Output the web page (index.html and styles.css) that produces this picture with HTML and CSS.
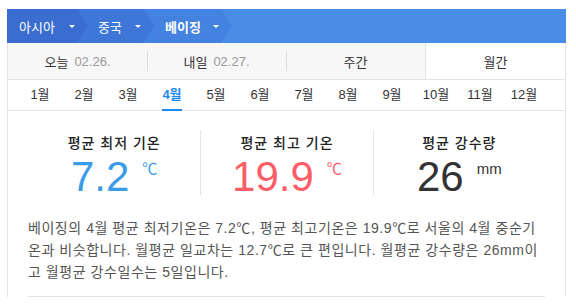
FILE: index.html
```html
<!DOCTYPE html>
<html lang="ko">
  <head>
    <meta charset="UTF-8" />
    <meta name="viewport" content="width=device-width, initial-scale=1.0" />
    <title>월간 날씨</title>
    <link rel="stylesheet" href="styles.css">
  </head>
  <body>
    <div class="weather">
      <div class="crumbs">
        <a class="crumb crumb-1" href="#">아시아<span class="caret"></span></a>
        <a class="crumb crumb-2" href="#">중국<span class="caret"></span></a>
        <a class="crumb crumb-3 current" href="#">베이징<span class="caret"></span></a>
      </div>

      <div class="panel">
        <ul class="tabs">
          <li>오늘<span class="date">02.26.</span></li>
          <li>내일<span class="date">02.27.</span></li>
          <li>주간</li>
          <li class="active">월간</li>
        </ul>

        <ul class="months">
          <li><a href="#">1월</a></li>
          <li><a href="#">2월</a></li>
          <li><a href="#">3월</a></li>
          <li><a href="#" class="on">4월</a></li>
          <li><a href="#">5월</a></li>
          <li><a href="#">6월</a></li>
          <li><a href="#">7월</a></li>
          <li><a href="#">8월</a></li>
          <li><a href="#">9월</a></li>
          <li><a href="#">10월</a></li>
          <li><a href="#">11월</a></li>
          <li><a href="#">12월</a></li>
        </ul>

        <div class="stats">
          <div class="stat">
            <h3>평균 최저 기온</h3>
            <div class="value low"><span class="num">7.2</span><span class="unit">℃</span></div>
          </div>
          <div class="stat">
            <h3>평균 최고 기온</h3>
            <div class="value high"><span class="num">19.9</span><span class="unit">℃</span></div>
          </div>
          <div class="stat">
            <h3>평균 강수량</h3>
            <div class="value rain"><span class="num">26</span><span class="unit">mm</span></div>
          </div>
        </div>

        <p class="summary">
          베이징의 4월 평균 최저기온은 7.2℃, 평균 최고기온은 19.9℃로 서울의 4월 중순기온과 비슷합니다. 월평균 일교차는 12.7℃로 큰 편입니다. 월평균 강수량은 26mm이고 월평균 강수일수는 5일입니다.
        </p>
        <hr class="divider" />
      </div>
    </div>
  </body>
</html>
```

FILE: styles.css
```css
body {
  margin: 0;
  font-family: "Liberation Sans", "Noto Sans CJK KR", sans-serif;
  color: #333;
  background-color: #fff;
}
.weather {
  margin: 9px 0 0 7px;
  width: 559px;
}

/* breadcrumb bar */
.crumbs {
  display: flex;
  height: 34px;
  background-color: #4a8de6;
}
.crumb {
  position: relative;
  display: flex;
  align-items: center;
  color: #fff;
  font-size: 13px;
  text-decoration: none;
  box-sizing: border-box;
}
.crumb::after {
  content: "";
  position: absolute;
  top: 0;
  right: -11px;
  border-left: 11px solid;
  border-top: 17px solid transparent;
  border-bottom: 17px solid transparent;
  z-index: 1;
}
.crumb-1 {
  width: 70px;
  padding-left: 12px;
  background-color: #3a6dcf;
  z-index: 3;
}
.crumb-1::after {
  border-left-color: #3a6dcf;
}
.crumb-2 {
  width: 66px;
  padding-left: 21px;
  background-color: #3e77d8;
  z-index: 2;
}
.crumb-2::after {
  border-left-color: #3e77d8;
}
.crumb-3 {
  width: 78px;
  padding-left: 22px;
  background-color: #4482df;
  z-index: 1;
}
.crumb-3::after {
  border-left-color: #4482df;
}
.crumb.current {
  font-weight: bold;
}
.caret {
  margin-left: auto;
  margin-right: 2px;
  border-left: 3px solid transparent;
  border-right: 3px solid transparent;
  border-top: 3px solid #fff;
}

.panel {
  border-left: 1px solid #e5e5e5;
  border-right: 1px solid #e5e5e5;
}

/* day / week / month tabs */
.tabs {
  display: flex;
  list-style: none;
  margin: 0;
  padding: 0;
  border-bottom: 1px solid #e5e5e5;
}
.tabs li {
  position: relative;
  flex: 1;
  height: 36px;
  display: flex;
  align-items: center;
  justify-content: center;
  background-color: #f7f7f7;
  font-size: 13px;
  color: #333;
}
.tabs li + li::before {
  content: "";
  position: absolute;
  left: 0;
  top: 8px;
  width: 1px;
  height: 20px;
  background-color: #ddd;
}
.tabs .date {
  margin-left: 6px;
  color: #999;
}
.tabs li.active {
  background-color: #fff;
  border-left: 1px solid #e5e5e5;
}
.tabs li.active::before {
  display: none;
}

/* months */
.months {
  display: flex;
  list-style: none;
  margin: 0;
  padding: 0 10px;
  height: 30px;
  border-bottom: 1px solid #e5e5e5;
}
.months li {
  width: 44px;
  text-align: center;
}
.months a {
  display: inline-block;
  height: 30px;
  line-height: 30px;
  font-size: 13px;
  color: #333;
  text-decoration: none;
  box-sizing: border-box;
}
.months a.on {
  height: 31px;
  color: #1b8af0;
  font-weight: bold;
  border-bottom: 2px solid #1a8cff;
}

/* averages */
.stats {
  display: grid;
  grid-template-columns: repeat(3, 1fr);
  margin: 19px 20px 0;
}
.stat {
  padding-top: 3px;
  height: 62px;
  text-align: center;
}
.stat + .stat {
  border-left: 1px solid #e5e5e5;
}
.stat h3 {
  margin: 0;
  font-size: 14px;
  line-height: 20px;
  font-weight: 500;
  letter-spacing: 1px;
  color: #222;
}
.value {
  display: flex;
  justify-content: center;
  align-items: flex-start;
  margin-top: 5px;
}
.value .num {
  font-size: 42px;
  line-height: 38px;
}
.value .unit {
  font-size: 15px;
  line-height: 15px;
  margin: 3px 0 0 13px;
}
.low {
  color: #3a9be8;
}
.high {
  color: #ff5e68;
}
.rain {
  color: #333;
}

.summary {
  margin: 22px 20px 0;
  font-size: 14px;
  line-height: 22px;
  letter-spacing: 0.55px;
  color: #555;
  word-break: break-all;
}
.divider {
  border: 0;
  border-top: 1px solid #e5e5e5;
  margin: 13px 20px 0;
}
```
